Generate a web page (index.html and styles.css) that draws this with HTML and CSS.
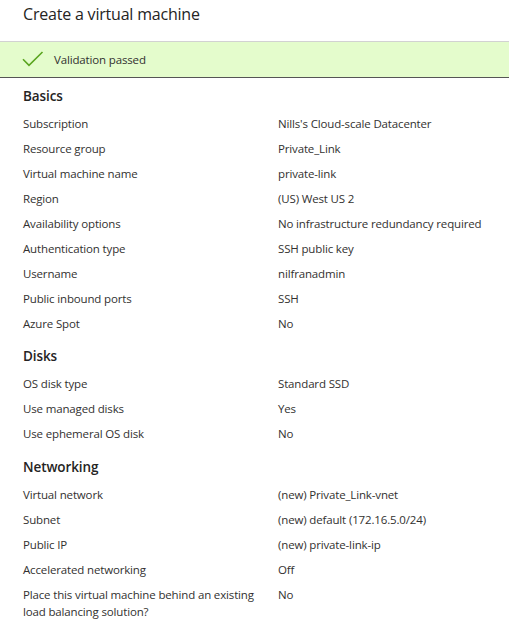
FILE: index.html
```html
<!DOCTYPE html>
<html lang="en">
<head>
<meta charset="utf-8">
<title>Create a virtual machine</title>
<link rel="stylesheet" href="styles.css">
</head>
<body>
<div class="page">
  <h1 class="title">Create a virtual machine</h1>
  <div class="banner">
    <svg class="check" width="22" height="16" viewBox="0 0 22 16"><path d="M1 8.2 L7 14.3 L20.5 1" fill="none" stroke="#5aa51f" stroke-width="1.6"/></svg>
    <span>Validation passed</span>
  </div>

  <h2 class="section">Basics</h2>
  <div class="grid">
    <div class="label">Subscription</div><div class="value">Nills's Cloud-scale Datacenter</div>
    <div class="label">Resource group</div><div class="value">Private_Link</div>
    <div class="label">Virtual machine name</div><div class="value">private-link</div>
    <div class="label">Region</div><div class="value">(US) West US 2</div>
    <div class="label">Availability options</div><div class="value">No infrastructure redundancy required</div>
    <div class="label">Authentication type</div><div class="value">SSH public key</div>
    <div class="label">Username</div><div class="value">nilfranadmin</div>
    <div class="label">Public inbound ports</div><div class="value">SSH</div>
    <div class="label">Azure Spot</div><div class="value">No</div>
  </div>

  <h2 class="section">Disks</h2>
  <div class="grid grid-loose">
    <div class="label">OS disk type</div><div class="value">Standard SSD</div>
    <div class="label">Use managed disks</div><div class="value">Yes</div>
    <div class="label">Use ephemeral OS disk</div><div class="value">No</div>
  </div>

  <h2 class="section">Networking</h2>
  <div class="grid">
    <div class="label">Virtual network</div><div class="value">(new) Private_Link-vnet</div>
    <div class="label">Subnet</div><div class="value">(new) default (172.16.5.0/24)</div>
    <div class="label">Public IP</div><div class="value">(new) private-link-ip</div>
    <div class="label">Accelerated networking</div><div class="value">Off</div>
    <div class="label">Place this virtual machine behind an existing load balancing solution?</div><div class="value">No</div>
  </div>
</div>
</body>
</html>
```

FILE: styles.css
```css
html, body {
  margin: 0;
  padding: 0;
  background: #ffffff;
}
body {
  font-family: "Open Sans", "Noto Sans", sans-serif;
  color: #323130;
  font-size: 11.5px;
  letter-spacing: -0.15px;
}
.page {
  width: 509px;
}
.title {
  margin: 0;
  padding: 0 0 0 23px;
  height: 41px;
  line-height: 28px;
  font-size: 16px;
  letter-spacing: -0.2px;
  font-weight: 400;
  color: #252423;
}
.banner {
  display: flex;
  align-items: center;
  gap: 10px;
  height: 35px;
  padding-left: 22px;
  background: #e4fccc;
  border-top: 1px solid #d2d2d2;
  border-bottom: 1px solid #555555;
  color: #323130;
}
.check {
  display: block;
  margin-top: -2px;
}
.section {
  margin: 0;
  padding: 8px 0 5px 23px;
  font-size: 13.5px;
  letter-spacing: -0.1px;
  line-height: 20px;
  font-weight: 600;
  color: #252423;
}
.grid {
  display: grid;
  grid-template-columns: 255px 1fr;
  padding-left: 23px;
  margin-bottom: 2px;
}
.grid-loose {
  margin-bottom: 3px;
}
.label, .value {
  line-height: 17px;
  padding: 4px 0;
  min-height: 17px;
}
.label {
  padding-right: 8px;
}
```
